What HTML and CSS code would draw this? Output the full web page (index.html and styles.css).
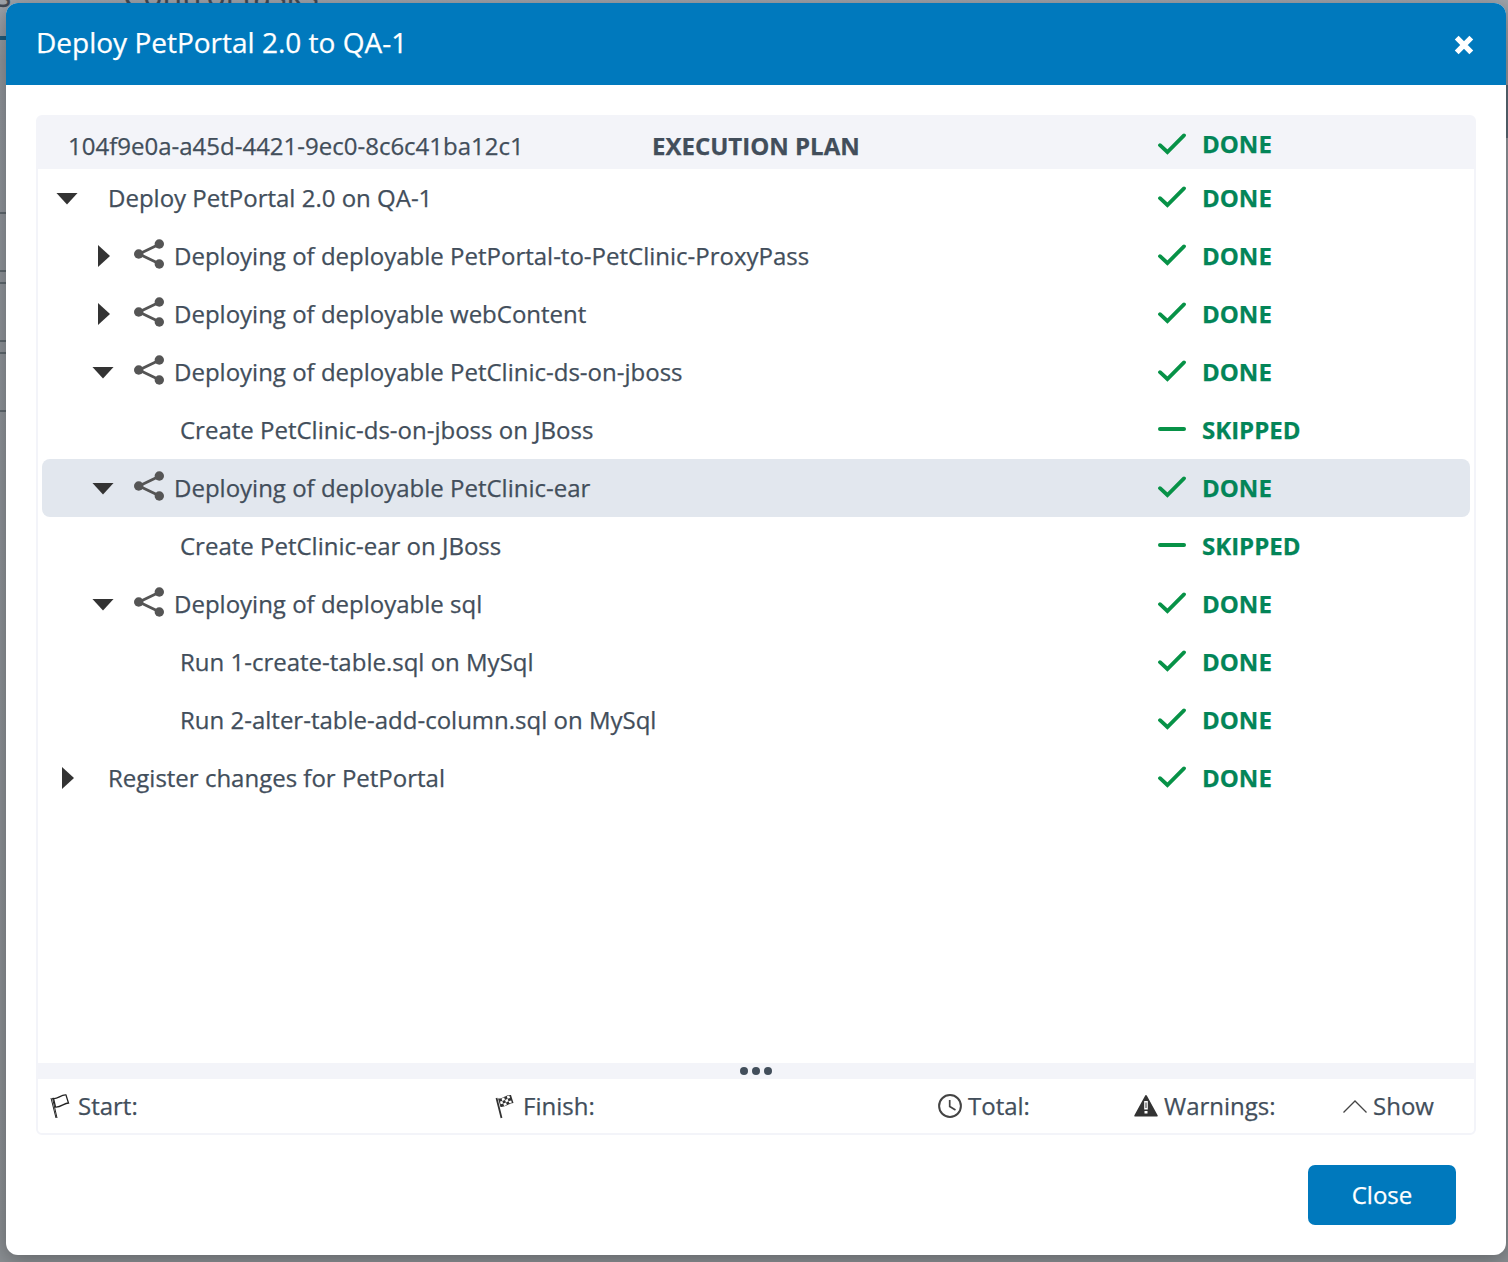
FILE: index.html
```html
<!DOCTYPE html>
<html lang="en">
<head>
<meta charset="utf-8">
<title>Deploy PetPortal 2.0 to QA-1</title>
<link rel="stylesheet" href="styles.css">
</head>
<body>
<svg class="defs" width="0" height="0">
  <symbol id="check" viewBox="0 0 28 22"><path d="M2 12.2 9.4 19 26 2.4" fill="none" stroke="#079247" stroke-width="3.8" stroke-linecap="round"/></symbol>
  <symbol id="dash" viewBox="0 0 28 22"><path d="M2 11h24" fill="none" stroke="#079247" stroke-width="4" stroke-linecap="round"/></symbol>
  <symbol id="share" viewBox="0 0 30 30"><path d="M25.3 5.2 5 15l20.300 9.800" fill="none" stroke="#555" stroke-width="2.800"/><g fill="#555"><circle cx="25.300" cy="5" r="4.700"/><circle cx="4.700" cy="15" r="4.700"/><circle cx="25.300" cy="25" r="4.700"/></g></symbol>
</svg>
<div class="page">
  <span class="tab tab-first">s</span><span class="tab">Control tasks</span>
</div>
<main class="dialog">
  <header class="dialog-head">
    <h1>Deploy PetPortal 2.0 to QA-1</h1>
    <svg class="x" width="20" height="20" viewBox="0 0 20 20"><path d="M2.700 2.700 17.300 17.300M17.300 2.700 2.700 17.300" stroke="#fff" stroke-width="5.400"/></svg>
  </header>
  <section class="panel">
    <div class="plan-head">
      <span class="plan-id">104f9e0a-a45d-4421-9ec0-8c6c41ba12c1</span>
      <span class="plan-title">EXECUTION PLAN</span>
      <span class="status"><svg><use href="#check"/></svg>DONE</span>
    </div>
    <div class="tree">
      <div class="row l0"><i class="arrow open"></i><span class="name">Deploy PetPortal 2.0 on QA-1</span><span class="status"><svg><use href="#check"/></svg>DONE</span></div>
      <div class="row l1"><i class="arrow"></i><svg class="share"><use href="#share"/></svg><span class="name">Deploying of deployable PetPortal-to-PetClinic-ProxyPass</span><span class="status"><svg><use href="#check"/></svg>DONE</span></div>
      <div class="row l1"><i class="arrow"></i><svg class="share"><use href="#share"/></svg><span class="name">Deploying of deployable webContent</span><span class="status"><svg><use href="#check"/></svg>DONE</span></div>
      <div class="row l1"><i class="arrow open"></i><svg class="share"><use href="#share"/></svg><span class="name">Deploying of deployable PetClinic-ds-on-jboss</span><span class="status"><svg><use href="#check"/></svg>DONE</span></div>
      <div class="row l2"><span class="name">Create PetClinic-ds-on-jboss on JBoss</span><span class="status"><svg><use href="#dash"/></svg>SKIPPED</span></div>
      <div class="row l1 selected"><i class="arrow open"></i><svg class="share"><use href="#share"/></svg><span class="name">Deploying of deployable PetClinic-ear</span><span class="status"><svg><use href="#check"/></svg>DONE</span></div>
      <div class="row l2"><span class="name">Create PetClinic-ear on JBoss</span><span class="status"><svg><use href="#dash"/></svg>SKIPPED</span></div>
      <div class="row l1"><i class="arrow open"></i><svg class="share"><use href="#share"/></svg><span class="name">Deploying of deployable sql</span><span class="status"><svg><use href="#check"/></svg>DONE</span></div>
      <div class="row l2"><span class="name">Run 1-create-table.sql on MySql</span><span class="status"><svg><use href="#check"/></svg>DONE</span></div>
      <div class="row l2"><span class="name">Run 2-alter-table-add-column.sql on MySql</span><span class="status"><svg><use href="#check"/></svg>DONE</span></div>
      <div class="row l0"><i class="arrow"></i><span class="name">Register changes for PetPortal</span><span class="status"><svg><use href="#check"/></svg>DONE</span></div>
    </div>
    <div class="splitter"><i></i><i></i><i></i></div>
    <div class="summary">
      <span class="start"><svg width="20" height="26" viewBox="0 0 20 26" fill="none" stroke="#222" stroke-width="1.300"><path d="M1 5 6 25M2.500 5 7 25" stroke-width="1"/><path d="M3.500 5.500C8 6 11 1.500 16 2L18.500 10C14 10 11 14.500 5.500 14Z"/></svg>Start:</span>
      <span class="finish"><svg width="20" height="26" viewBox="0 0 20 26"><path d="M1.500 5 6.500 25" stroke="#333" stroke-width="1.800"/><path d="M3 5.500C8 6 11 1.500 16 2L18.500 10C14 10 11 14.500 5.500 14Z" fill="#333"/><g fill="#fff"><path d="m6.500 5.600 2.700-1.200.8 2.500-2.700 1.100zM11.800 3.200l2.500-.7.800 2.400-2.500.8zM5 8.500l2.300-.5.900 2.600-2.500.7zM10 6.900l2.600-1.200.9 2.600-2.500 1.200zM8.200 10.600l2.800-1.100.8 2.400-2.700 1.100zM13.500 8.300l2.600-.8.8 2-2.500.8z"/></g></svg>Finish:</span>
      <span class="total"><svg width="24" height="24" viewBox="0 0 24 24" fill="none" stroke="#444"><circle cx="12" cy="12" r="10.900" stroke-width="2"/><path d="M11.700 6v6.500l5.800 3.500" stroke-width="1.700"/></svg>Total:</span>
      <span class="warnings"><svg width="24" height="22" viewBox="0 0 24 22"><path d="M12 1 22.800 20.700H1.200Z" fill="#333" stroke="#333" stroke-width="1.800" stroke-linejoin="round"/><path d="M10.200 6h3.600v8.500h-3.600zM10.500 16h3v2.600h-3z" fill="#fff"/><path d="M12 7.500v5.500" stroke="#333" stroke-width="1"/></svg>Warnings:</span>
      <span class="show"><svg width="24" height="13" viewBox="0 0 24 13"><path d="M.5 12.500 12 1l11.500 11.500" fill="none" stroke="#444" stroke-width="1.300"/></svg>Show</span>
    </div>
  </section>
  <footer class="actions"><button class="close">Close</button></footer>
</main>
</body>
</html>
```
FILE: styles.css
```css
* { box-sizing: border-box; }
body {
  margin: 0;
  width: 1508px;
  height: 1262px;
  padding: 3px 2px 7px 6px;
  overflow: hidden;
  position: relative;
  background: #969ba1;
  font-family: "Open Sans", sans-serif;
  font-size: 24px;
  color: #424e5b;
  -webkit-text-stroke: .25px currentColor;
}
.defs { position: absolute; }
.page {
  position: absolute;
  inset: 0;
  color: #424a55;
  font-size: 32px;
  line-height: 38px;
  background:
    linear-gradient(#205a7a, #205a7a) 0 36px / 10px 4px no-repeat,
    linear-gradient(#5f686e, #5f686e) 0 212px / 10px 2px no-repeat,
    linear-gradient(#5f686e, #5f686e) 0 270px / 10px 2px no-repeat,
    linear-gradient(#5f686e, #5f686e) 0 282px / 10px 2px no-repeat,
    linear-gradient(#5f686e, #5f686e) 0 340px / 10px 2px no-repeat,
    linear-gradient(#5f686e, #5f686e) 0 352px / 10px 2px no-repeat,
    linear-gradient(#5f686e, #5f686e) 0 410px / 10px 2px no-repeat,
    linear-gradient(#596873, #596873) 1500px 85px / 8px 53px no-repeat,
    linear-gradient(#9fa4ab, #8f949a 60px, #8a8e92);
}
.tab { position: absolute; top: -24px; left: 123px; white-space: nowrap; }
.tab-first { left: -4px; }
.dialog {
  position: relative;
  height: 1252px;
  border-radius: 12px;
  background: #fff;
  box-shadow: 0 4px 20px rgba(0, 0, 0, .3);
}
.dialog-head {
  height: 82px;
  padding: 0 32px 0 30px;
  border-radius: 12px 12px 0 0;
  background: #0079bd;
  color: #fff;
  display: flex;
  justify-content: space-between;
  align-items: center;
}
h1 { margin: 0 0 5px; font-size: 28px; font-weight: 400; line-height: 38px; }
.x { margin-top: 2px; }
.panel {
  margin: 30px 30px 0;
  height: 1020px;
  border: 2px solid #f3f4f9;
  border-radius: 6px;
  display: flex;
  flex-direction: column;
}
.plan-head {
  height: 52px;
  padding: 0 4px 0 30px;
  background: #f3f4f9;
  display: flex;
  align-items: center;
}
.plan-id { width: 584px; padding-top: 4px; }
.plan-title { flex: 1; padding-top: 4px; font-weight: 700; }
.tree { flex: 1; padding: 0 4px; }
.row { height: 58px; display: flex; align-items: center; border-radius: 8px; white-space: nowrap; }
.name { flex: 1; padding-bottom: 2px; }
.selected { background: #e2e7ee; }
.l0 { padding-left: 14px; }
.l1 { padding-left: 50px; }
.l2 { padding-left: 138px; }
.arrow { width: 22px; height: 22px; display: grid; place-items: center; }
.arrow::before {
  content: "";
  width: 12px;
  height: 22px;
  margin-left: 2px;
  background: #333;
  clip-path: polygon(0 0, 100% 50%, 0 100%);
}
.arrow.open::before { width: 22px; height: 12px; margin: 1px 0 0; clip-path: polygon(0 0, 100% 0, 50% 100%); }
.l0 .arrow { margin-right: 30px; }
.share { width: 30px; height: 30px; margin: -4px 10px 0 20px; }
.status {
  width: 312px;
  padding-bottom: 2px;
  display: flex;
  align-items: center;
  gap: 16px;
  color: #038558;
  font-weight: 700;
}
.plan-head .status { padding: 1px 0 0; }
.status svg { width: 28px; height: 22px; }
.splitter { height: 16px; background: #f3f4f9; display: flex; gap: 4px; justify-content: center; align-items: center; }
.splitter i { width: 8px; height: 8px; border-radius: 50%; background: #424e5b; }
.summary {
  height: 54px;
  padding: 0 0 2px 12px;
  display: grid;
  grid-template-columns: 445px 443px 196px 209px 1fr;
  align-items: center;
}
.summary span { display: flex; align-items: center; gap: 6px; white-space: nowrap; }
.summary svg { margin-top: 2px; }
.start svg, .finish svg { margin-right: 2px; }
.actions { padding: 30px 50px 0 0; display: flex; justify-content: flex-end; }
.close {
  width: 148px;
  height: 60px;
  padding: 0 0 2px;
  border: 0;
  border-radius: 7px;
  background: #0079bd;
  color: #fff;
  font: 24px "Open Sans", sans-serif;
  -webkit-text-stroke: .25px currentColor;
}
```
